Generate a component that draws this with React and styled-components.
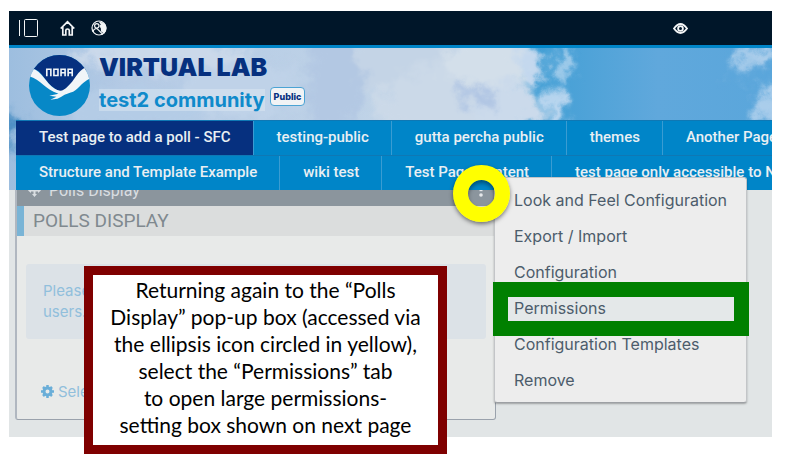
import React from "react";
import styled, { createGlobalStyle, css } from "styled-components";

const GlobalStyle = createGlobalStyle`
  *, *::before, *::after { box-sizing: border-box; }
  body { margin: 0; background: #fff; font-family: Inter, "Open Sans", sans-serif; }
  button { font: inherit; border: 0; padding: 0; background: none; color: inherit; cursor: pointer; }
  a { color: inherit; text-decoration: none; }
  h1, h2, p, ul { margin: 0; padding: 0; }
  ul { list-style: none; }
`;

const Page = styled.div`
  margin: 11px 13px 35px 9px;
  background: #e1e5e6;
`;

const TopBar = styled.div`
  display: flex;
  align-items: center;
  height: 34px;
  padding: 0 84px 0 10px;
  background: #001629;
  color: #f4f6f7;
`;

const IconButton = styled.button`
  display: flex;
  margin-right: ${(p) => p.$gap || 0}px;
  margin-left: ${(p) => (p.$end ? "auto" : 0)};
  svg { display: block; }
`;

const Header = styled.header`
  position: relative;
  z-index: 1;
  overflow: hidden;
  border-top: 3px solid #0085c8;
`;

const Sky = styled.svg`
  position: absolute;
  inset: 0;
  width: 100%;
  height: 100%;
`;

const Brand = styled.div`
  position: relative;
  display: flex;
  align-items: flex-start;
  gap: 9px;
  height: 72px;
  padding: 7px 20px 0;
`;

const BrandText = styled.div`
  display: flex;
  flex-direction: column;
  gap: 8px;
`;

const SiteName = styled.h1`
  font-size: 25px;
  font-weight: 900;
  line-height: 24px;
  color: #06307f;
`;

const Community = styled.div`
  display: flex;
  align-items: flex-start;
  gap: 5px;
  padding-top: 2px;
`;

const CommunityLink = styled.a`
  font-size: 20px;
  font-weight: 700;
  line-height: 22px;
  color: #0f8acb;
  background: rgba(225, 234, 244, 0.45);
`;

const Badge = styled.span`
  margin-top: -2px;
  height: 19px;
  padding: 0 3px;
  border: 1px solid #4ba3d4;
  border-radius: 4px;
  background: #f1f3f5;
  color: #06307f;
  font-size: 9px;
  font-weight: 800;
  line-height: 17px;
`;

const Nav = styled.nav`
  position: relative;
  margin-left: 7px;
  background: #0085c8;
  font-family: Roboto, sans-serif;
`;

const NavRow = styled.ul`
  display: flex;
  height: 35px;
  overflow: hidden;
  white-space: nowrap;
  border-top: 1px solid #0f78b4;
`;

const NavItem = styled.li`
  flex: none;
  border-right: 1px solid #3a9cd2;
  background: ${(p) => (p.$active ? "#06307f" : "transparent")};
`;

const NavLink = styled.a`
  display: block;
  padding: 0 22px 0 23px;
  font-size: 15px;
  font-weight: 500;
  line-height: 33px;
  color: #e9eff3;
`;

const Content = styled.main`
  display: flow-root;
  position: relative;
  padding: 0 0 17px 6px;
`;

const Portlet = styled.section`
  position: relative;
  width: 481px;
  max-width: 64%;
  margin-top: -14px;
  border: 1px solid #9aa2ac;
  border-left: 2px solid #b0b7c0;
  border-radius: 0 0 3px 3px;
  background: #e8eae9;
`;

const PortletBar = styled.div`
  display: flex;
  align-items: center;
  gap: 8px;
  height: 29px;
  padding: 0 11px 2px;
  background: #8b959d;
  color: #d9dee2;
  font-family: Roboto, sans-serif;
  font-size: 16px;
`;

const MoreButton = styled.button`
  position: relative;
  z-index: 3;
  margin-left: auto;
  width: 6px;
  height: 16px;
  color: #e6e8ea;
  svg { display: block; }
`;

const YellowRing = styled.span`
  position: absolute;
  left: -25px;
  top: -18px;
  width: 57px;
  height: 57px;
  border: 15px solid #ffff00;
  border-radius: 50%;
  box-shadow: 0 2px 4px rgba(0, 0, 0, 0.5), inset 0 3px 4px rgba(0, 0, 0, 0.4);
`;

const PortletTitle = styled.h2`
  height: 30px;
  padding-left: 9px;
  border-left: 7px solid #79b4d6;
  background: #dbdddd;
  color: #80898f;
  font-family: Roboto, sans-serif;
  font-size: 19px;
  font-weight: 400;
  line-height: 30px;
`;

const Notice = styled.p`
  height: 75px;
  margin: 28px 9px 41px;
  padding: 16px 17px;
  border-radius: 3px;
  background: #dce2e7;
  color: #91bfdc;
  font-size: 15px;
  line-height: 21px;
`;

const SelectLink = styled.a`
  display: flex;
  align-items: center;
  gap: 4px;
  height: 22px;
  margin: 0 0 17px 24px;
  color: #91bfdc;
  font-size: 15px;
  svg { color: #6aaed8; }
`;

const Menu = styled.ul`
  position: absolute;
  z-index: 2;
  left: calc(100% - 1px);
  top: 0;
  width: 253px;
  padding: 4px 0;
  border: 1px solid #c3c5c8;
  border-bottom-color: #9da0a4;
  border-radius: 3px;
  background: #ededed;
  box-shadow: 0 1px 2px rgba(0, 0, 0, 0.3);
`;

const MenuItem = styled.li`
  position: relative;
`;

const MenuButton = styled.button`
  display: block;
  width: 100%;
  padding-left: 19px;
  text-align: left;
  font-size: 16px;
  font-weight: 400;
  line-height: 36px;
  color: #4c5c6b;
  ${(p) => p.$marked && css`background: #e4e8e9;`}
`;

const GreenFrame = styled.span`
  position: absolute;
  inset: -8px -3px -10px -2px;
  border: 15px solid #008000;
  pointer-events: none;
`;

const Callout = styled.aside`
  position: absolute;
  z-index: 4;
  left: 75px;
  top: 76px;
  width: 363px;
  padding: 1px 8px 7px;
  border: 9px solid #7f0000;
  background: #fff;
  color: #000;
  font-family: Lato, "Open Sans", sans-serif;
  font-size: 21px;
  line-height: 27px;
  text-align: center;
  white-space: nowrap;
`;

const skyClouds = [
  [395, 15, 70, 35, "#c4d4e6"], [440, 60, 70, 45, "#cbd9e8"], [150, 5, 90, 16, "#cbd9ea"],
  [325, 30, 28, 60, "#b3c8e3"], [130, 60, 80, 20, "#b4cce6"], [230, 40, 60, 30, "#bfd2e8"],
  [480, 12, 50, 26, "#d3dfea"], [495, 58, 38, 25, "#cbdaeb"], [470, 50, 18, 11, "#b1c6e4"],
  [523, 16, 13, 20, "#c4d8ee"], [545, 64, 9, 26, "#bdd7ef"], [555, 16, 7, 18, "#a9cfec"],
  [733, 18, 9, 14, "#a6cbea"], [754, 4, 20, 8, "#b3d1ec"], [762, 58, 14, 22, "#aacdeb"],
];

function SkyDrawing() {
  return (
    <Sky viewBox="0 0 763 142" preserveAspectRatio="none" aria-hidden="true">
      <defs>
        <linearGradient id="sky-base">
          <stop offset="0" stopColor="#9dbedf" />
          <stop offset=".15" stopColor="#b4cae5" />
          <stop offset=".45" stopColor="#bed2e7" />
          <stop offset=".62" stopColor="#cadaea" />
          <stop offset=".69" stopColor="#429fd5" />
          <stop offset=".85" stopColor="#60a8dc" />
          <stop offset="1" stopColor="#5aa6db" />
        </linearGradient>
        <filter id="sky-edges" x="-10%" y="-10%" width="120%" height="120%" colorInterpolationFilters="sRGB">
          <feGaussianBlur stdDeviation="5" result="soft" />
          <feTurbulence type="fractalNoise" baseFrequency=".05" numOctaves="5" seed="8" result="noise" />
          <feDisplacementMap in="soft" in2="noise" scale="36" xChannelSelector="R" yChannelSelector="G" />
        </filter>
      </defs>
      <rect width="763" height="142" fill="url(#sky-base)" />
      <g filter="url(#sky-edges)">
        {skyClouds.map(([cx, cy, rx, ry, fill], i) => (
          <ellipse key={i} cx={cx} cy={cy} rx={rx} ry={ry} fill={fill} />
        ))}
        <ellipse cx="0" cy="86" rx="9" ry="22" fill="#4b8fc4" />
      </g>
    </Sky>
  );
}

function NoaaLogo() {
  return (
    <svg width="61" height="61" viewBox="0 0 60 60" role="img" aria-label="NOAA">
      <defs><clipPath id="noaa-disc"><circle cx="30" cy="30" r="30" /></clipPath></defs>
      <g clipPath="url(#noaa-disc)">
        <rect width="60" height="60" fill="#0788c7" />
        <path d="M0 0H60V13C50 19 45 33 34 35Q29 37 24 32C15 25 12 14 4 14L0 17Z" fill="#06307f" />
        <path d="M3 13C13 16 17 28 25 33Q32 38 38 31C45 25 48 15 56 12L60 23C51 27 48 35 41 37L35 39Q32 41 28 43L21 44L27 41L20 40L29 38C15 34 12 24 0 21Z" fill="#f1f5f8" />
      </g>
      <g fill="none" stroke="#f1f5f8" strokeWidth="1.6">
        <path d="M17.500 21V14H21.500V21M24.500 14H28.500V20.200H24.500ZM31.500 21V14H35.500V21M31.500 17.500H35.500M38.500 21V14H42.500V21M38.500 17.500H42.500" />
      </g>
    </svg>
  );
}

const firstRow = ["Test page to add a poll - SFC", "testing-public", "gutta percha public", "themes", "Another Page"];
const secondRow = ["Structure and Template Example", "wiki test", "Test Page Content", "test page only accessible to NOAA"];
const menuItems = ["Look and Feel Configuration", "Export / Import", "Configuration", "Permissions", "Configuration Templates", "Remove"];

function NavLine({ items, active }) {
  return (
    <NavRow>
      {items.map((name) => (
        <NavItem key={name} $active={name === active}><NavLink href="#">{name}</NavLink></NavItem>
      ))}
    </NavRow>
  );
}

function PortletArea() {
  return (
    <Portlet>
      <PortletBar>
        <svg width="13" height="13" viewBox="0 0 13 13" fill="currentColor"><path d="M6.500 0 9 3H7.500V5.500H10V4L13 6.500 10 9V7.500H7.500V10H9L6.500 13 4 10H5.500V7.500H3V9L0 6.500 3 4V5.500H5.500V3H4Z" /></svg>
        <span>Polls Display</span>
        <MoreButton aria-label="Options">
          <svg width="6" height="16" fill="currentColor"><path d="M1.500 7H4.500V8.200H1.500Z" /><circle cx="3" cy="12" r="1.800" /></svg>
          <YellowRing />
        </MoreButton>
      </PortletBar>
      <PortletTitle>POLLS DISPLAY</PortletTitle>
      <Notice>Please<br />users.</Notice>
      <SelectLink href="#">
        <svg width="13" height="13" viewBox="0 0 13 13"><circle cx="6.500" cy="6.500" r="3.500" fill="none" stroke="currentColor" strokeWidth="3" /><path d="M6.500 0V3M6.500 10V13M0 6.500H3M10 6.500H13M2 2 4 4M9 9 11 11M2 11 4 9M9 4 11 2" stroke="currentColor" strokeWidth="2.500" /></svg>
        Select
      </SelectLink>
      <Menu>
        {menuItems.map((name) => (
          <MenuItem key={name}>
            <MenuButton $marked={name === "Permissions"}>{name}</MenuButton>
            {name === "Permissions" && <GreenFrame />}
          </MenuItem>
        ))}
      </Menu>
    </Portlet>
  );
}

export default function App() {
  return (
    <>
      <GlobalStyle />
      <Page>
        <TopBar>
          <IconButton $gap={21} aria-label="Toggle panel">
            <svg width="20" height="18" fill="none" stroke="currentColor"><path d="M.5 1V17M5.500 1.500Q5.500 .5 6.500 .5H17.500Q18.500 .5 18.500 1.500V16.500Q18.500 17.500 17.500 17.500H6.500Q5.500 17.500 5.500 16.500Z" /></svg>
          </IconButton>
          <IconButton $gap={16} aria-label="Home">
            <svg width="15" height="16" viewBox="0 0 15 16" fill="none" stroke="currentColor" strokeWidth="1.700"><path d="M.7 8.500 7.500 1.800 14.300 8.500M2.800 7V15H5.800V10.500Q5.800 9 7.500 9T9.300 10.500V15H12.200V7" /></svg>
          </IconButton>
          <IconButton aria-label="Sites">
            <svg width="16" height="16" viewBox="0 0 16 16" fill="none" stroke="currentColor" strokeWidth="1.200"><circle cx="8" cy="8" r="7" /><circle cx="5.800" cy="5.800" r="2.200" /><path d="M2 12Q2.500 8.500 6 8.500L12 14.500" /><path d="M9 2.500 10.500 4.500 9.200 6 10.500 8.500V11L13 13Q16 9 14 5L11.500 3Z" fill="currentColor" /></svg>
          </IconButton>
          <IconButton $end aria-label="Preview">
            <svg width="15" height="11" viewBox="0 0 15 11" fill="none" stroke="currentColor" strokeWidth="1.800"><path d="M1 5.500Q7.500-3.500 14 5.500Q7.500 14.500 1 5.500Z" /><circle cx="7.500" cy="5.500" r="2.400" /></svg>
          </IconButton>
        </TopBar>
        <Header>
          <SkyDrawing />
          <Brand>
            <NoaaLogo />
            <BrandText>
              <SiteName>VIRTUAL LAB</SiteName>
              <Community>
                <CommunityLink href="#">test2 community</CommunityLink>
                <Badge>Public</Badge>
              </Community>
            </BrandText>
          </Brand>
          <Nav>
            <NavLine items={firstRow} active={firstRow[0]} />
            <NavLine items={secondRow} />
          </Nav>
        </Header>
        <Content>
          <PortletArea />
          <Callout>
            Returning again to the “Polls<br />
            Display” pop-up box (accessed via<br />
            the ellipsis icon circled in yellow),<br />
            select the “Permissions” tab<br />
            to open large permissions-<br />
            setting box shown on next page
          </Callout>
        </Content>
      </Page>
    </>
  );
}
